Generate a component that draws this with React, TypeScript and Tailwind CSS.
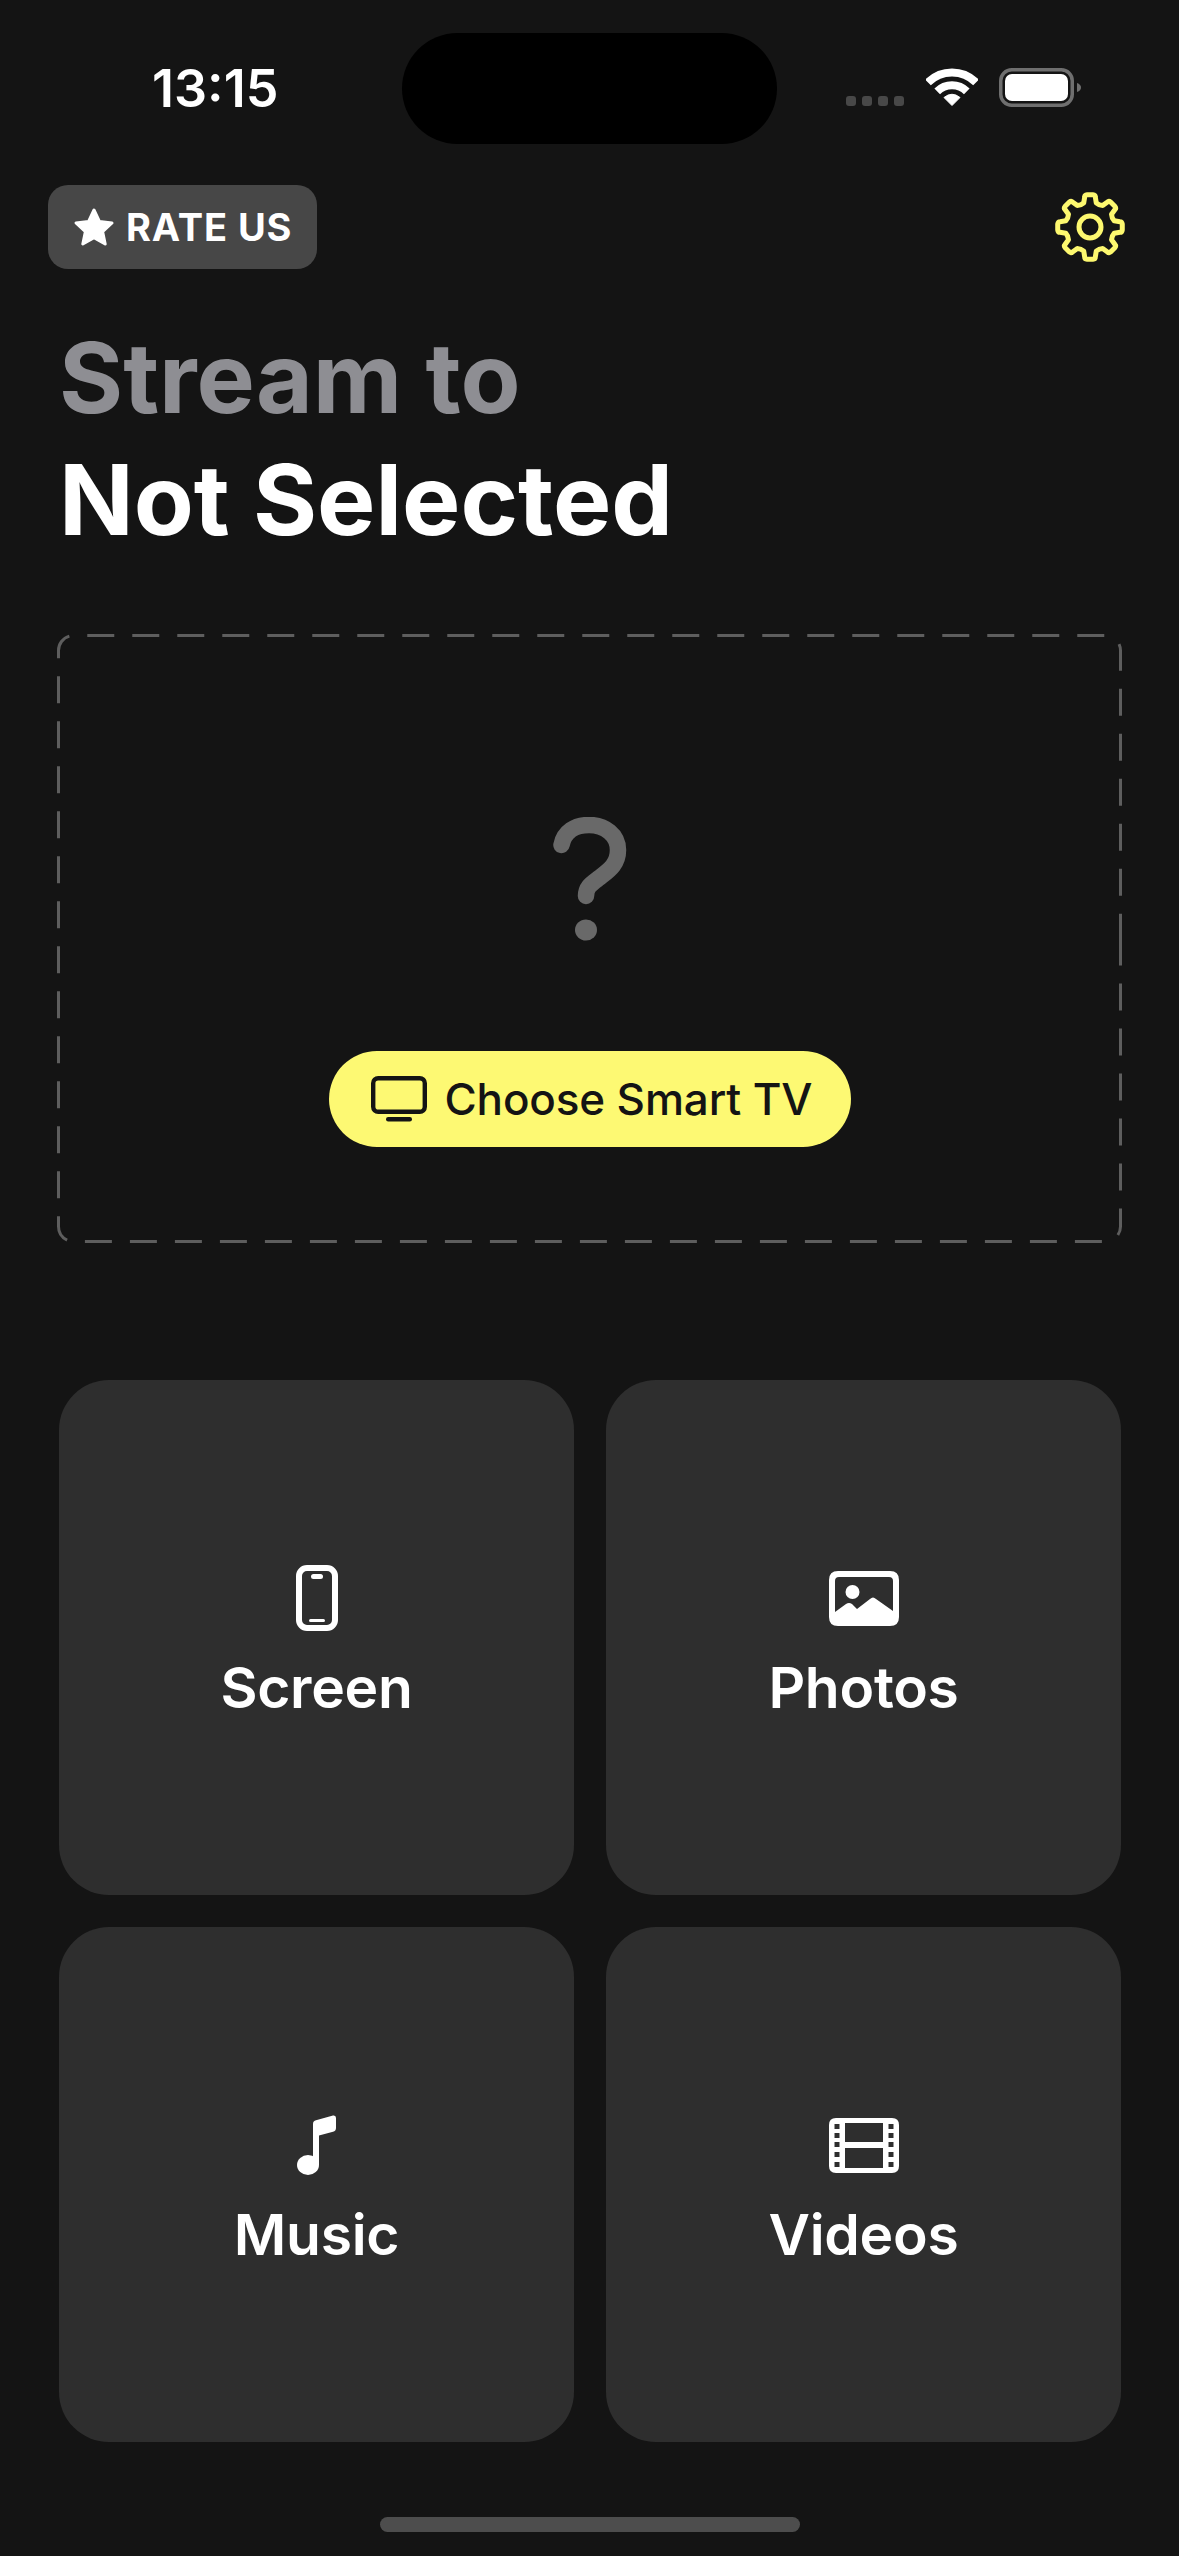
import React from "react";

function gearPath(cx: number, cy: number) {
  const outer = 32;
  const inner = 25;
  const n = 8;
  const pt = (r: number, deg: number) => {
    const a = ((deg - 90) * Math.PI) / 180;
    return `${(cx + r * Math.cos(a)).toFixed(2)} ${(cy + r * Math.sin(a)).toFixed(2)}`;
  };
  let d = "";
  for (let i = 0; i < n; i++) {
    const c = (i * 360) / n;
    const start = pt(inner, c - 14.5);
    d += i === 0 ? `M${start} ` : `Q${pt(inner - 1.5, c - 22.5)} ${start} `;
    d += `L${pt(outer - 1.5, c - 10)} Q${pt(outer + 0.4, c - 9.5)} ${pt(outer + 0.4, c - 5)} L${pt(outer + 0.4, c + 5)} Q${pt(outer + 0.4, c + 9.5)} ${pt(outer - 1.5, c + 10)} L${pt(inner, c + 14.5)} `;
  }
  d += `Q${pt(inner - 1.5, -22.5)} ${pt(inner, -14.5)} Z`;
  return d;
}

function Wifi() {
  return (
    <svg width="52" height="38" viewBox="0 0 52 38" className="block">
      <path d="M2 14.4 A34 34 0 0 1 50 14.4" fill="none" stroke="#fff" strokeWidth="8" />
      <path d="M11.2 23.4 A21 21 0 0 1 40.8 23.4" fill="none" stroke="#fff" strokeWidth="8" />
      <path d="M26 37.5 L18 29.5 Q26 23 34 29.5 Z" fill="#fff" stroke="#fff" strokeWidth="1" strokeLinejoin="round" />
    </svg>
  );
}

function Battery() {
  return (
    <svg width="82" height="39" viewBox="0 0 82 39" className="block">
      <rect x="1.75" y="1.75" width="71.5" height="35.5" rx="11" fill="none" stroke="#6f6f6f" strokeWidth="3.5" />
      <rect x="6" y="6" width="63" height="27" rx="7" fill="#fff" />
      <path d="M78 15 Q82 16.5 82 19.5 Q82 22.5 78 24 Z" fill="#6f6f6f" />
    </svg>
  );
}

function Card({ label, children }: { label: string; children: React.ReactNode }) {
  return (
    <div className="h-[515px] rounded-[50px] bg-[#2e2e2e] flex flex-col items-center pt-[183px]">
      <div className="h-[70px] flex items-center justify-center">{children}</div>
      <div className="mt-[21px] text-[57px] leading-[68px] font-semibold tracking-[-0.3px] text-white">{label}</div>
    </div>
  );
}

export default function App() {
  return (
    <div className="relative w-[1179px] h-[2556px] overflow-hidden bg-[#141414] text-white font-['Inter',sans-serif] flex flex-col">
      <div className="absolute left-[402px] top-[33px] w-[375px] h-[111px] rounded-[56px] bg-black" />

      <div className="h-[185px] flex items-start">
        <div className="ml-[152px] mt-[60px] text-[52px] leading-[58px] font-semibold">13:15</div>
        <div className="ml-auto mr-[98px] mt-[68px] flex items-start">
          <div className="mt-[28px] flex gap-[6px] mr-[22px]">
            <div className="w-[10px] h-[10px] rounded-[3px] bg-[#484848]" />
            <div className="w-[10px] h-[10px] rounded-[3px] bg-[#484848]" />
            <div className="w-[10px] h-[10px] rounded-[3px] bg-[#484848]" />
            <div className="w-[10px] h-[10px] rounded-[3px] bg-[#484848]" />
          </div>
          <div className="mr-[21px]"><Wifi /></div>
          <Battery />
        </div>
      </div>

      <div className="h-[84px] flex items-center justify-between pl-[48px] pr-[53px]">
        <div className="w-[269px] h-[84px] rounded-[20px] bg-[#474747] flex items-center pl-[25px] gap-[11px]">
          <svg width="42" height="40" viewBox="0 0 42 40">
            <path d="M21 3 L26.5 14.6 L39 16 L29.6 24.6 L32.2 37 L21 30.6 L9.8 37 L12.4 24.6 L3 16 L15.5 14.6 Z" fill="#fff" stroke="#fff" strokeWidth="3" strokeLinejoin="round" />
          </svg>
          <span className="text-[38px] leading-[46px] font-bold tracking-[0.9px]">RATE US</span>
        </div>
        <svg width="72" height="72" viewBox="0 0 72 72">
          <path d={gearPath(36, 36)} fill="none" stroke="#fdf86f" strokeWidth="5" strokeLinejoin="round" />
          <circle cx="36" cy="36" r="11" fill="none" stroke="#fdf86f" strokeWidth="5" />
        </svg>
      </div>

      <div className="mt-[48px] ml-[59px] text-[98px] leading-[122px] font-bold">
        <div className="text-[#8e8e93]">Stream to</div>
        <div>Not Selected</div>
      </div>

      <div className="relative mt-[73px] ml-[57px] w-[1065px] h-[609px] flex flex-col items-center pt-[183px]">
        <svg className="absolute inset-0" width="1065" height="609" viewBox="0 0 1065 609">
          <path
            d="M1063.5 304.5 V592.5 A15 15 0 0 1 1048.5 607.5 H16.5 A15 15 0 0 1 1.5 592.5 V16.5 A15 15 0 0 1 16.5 1.5 H1048.5 A15 15 0 0 1 1063.5 16.5 V304.5"
            fill="none"
            stroke="#5e5e5e"
            strokeWidth="3"
            strokeDasharray="27 18"
          />
        </svg>
        <svg width="74" height="124" viewBox="0 0 74 124">
          <path d="M8.5 28 C11 15 22 8 36 8 C52 8 65 18 65 33 C65 48 55 54 46 61 C38 67 33 70 33 79" fill="none" stroke="#696969" strokeWidth="16.5" strokeLinecap="round" />
          <ellipse cx="33" cy="113" rx="11" ry="10.5" fill="#696969" />
        </svg>
        <div className="mt-[110px] w-[522px] h-[96px] rounded-[48px] bg-[#fdf973] flex items-center pl-[42px] gap-[18px] text-[#141414]">
          <svg width="56" height="46" viewBox="0 0 56 46">
            <rect x="2.2" y="2.2" width="51.6" height="33.6" rx="5" fill="none" stroke="#141414" strokeWidth="4.4" />
            <rect x="15" y="41" width="26" height="4.5" rx="2.2" fill="#141414" />
          </svg>
          <span className="text-[44px] leading-[54px] font-medium tracking-[-0.15px]">Choose Smart TV</span>
        </div>
      </div>

      <div className="mt-[137px] ml-[59px] w-[1062px] grid grid-cols-2 gap-[32px]">
        <Card label="Screen">
          <svg width="42" height="66" viewBox="0 0 42 66">
            <rect x="3" y="3" width="36" height="60" rx="8" fill="none" stroke="#fff" strokeWidth="6" />
            <rect x="15" y="9" width="12" height="5" rx="2.5" fill="#fff" />
            <rect x="13" y="54" width="16" height="3" rx="1.5" fill="#fff" />
          </svg>
        </Card>
        <Card label="Photos">
          <svg width="70" height="55" viewBox="0 0 70 55">
            <path
              fillRule="evenodd"
              d="M9 0 H61 Q70 0 70 9 V46 Q70 55 61 55 H9 Q0 55 0 46 V9 Q0 0 9 0 Z M10 6 H60 Q64 6 64 10 V40 L47 28 Q44 25 41 28 L28 38 L23 33 Q20 31 17 33 L6 41 V10 Q6 6 10 6 Z"
              fill="#fff"
            />
            <ellipse cx="23.5" cy="21" rx="7" ry="7" fill="#fff" />
          </svg>
        </Card>
        <Card label="Music">
          <svg width="40" height="60" viewBox="0 0 40 60">
            <ellipse cx="11" cy="50" rx="11" ry="10" fill="#fff" />
            <path d="M16 50 V9 Q16 6 19 5.3 L36 0.6 Q39 0 39 3 V13 Q39 16 36 16.7 L22 20.5 V50 Z" fill="#fff" />
          </svg>
        </Card>
        <Card label="Videos">
          <svg width="70" height="55" viewBox="0 0 70 55">
            <path
              fillRule="evenodd"
              d="M7 0 H63 Q70 0 70 7 V48 Q70 55 63 55 H7 Q0 55 0 48 V7 Q0 0 7 0 Z M16 5 V24 H54 V5 Z M16 30 V50 H54 V30 Z M5.5 6 V11 H10.5 V6 Z M5.5 15 V20 H10.5 V15 Z M5.5 24 V29 H10.5 V24 Z M5.5 34 V39 H10.5 V34 Z M5.5 44 V49 H10.5 V44 Z M59.5 6 V11 H64.5 V6 Z M59.5 15 V20 H64.5 V15 Z M59.5 24 V29 H64.5 V24 Z M59.5 34 V39 H64.5 V34 Z M59.5 44 V49 H64.5 V44 Z"
              fill="#fff"
            />
          </svg>
        </Card>
      </div>

      <div className="mt-[75px] mx-auto w-[420px] h-[15px] rounded-full bg-[#4d4d4d]" />
    </div>
  );
}
